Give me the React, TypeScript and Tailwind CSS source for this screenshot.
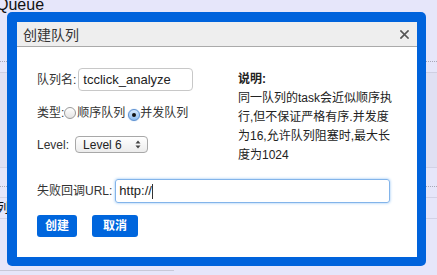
import React from "react";

const font = { fontFamily: '"Liberation Sans", "Noto Sans CJK SC", sans-serif' };

function Radio({ checked }: { checked?: boolean }) {
  return (
    <span
      className={
        "inline-flex items-center justify-center w-[12px] h-[12px] rounded-full border " +
        (checked
          ? "border-[#5b8fd0] bg-gradient-to-b from-[#d6e8fb] to-[#8dbcf0] shadow-[0_0_1px_#6aa0e0]"
          : "border-[#9a9a9a] bg-gradient-to-b from-white to-[#e4e4e4]")
      }
    >
      {checked && <span className="w-[4px] h-[4px] rounded-full bg-[#111]" />}
    </span>
  );
}

export default function App() {
  return (
    <div
      className="relative w-[437px] h-[275px] bg-[#e6e6fa] overflow-hidden text-[#333]"
      style={font}
    >
      {/* background page content */}
      <div className="flex flex-col w-full">
        <div className="h-[62px] border-b border-dotted border-[#a8a8b8]">
          <div className="-mt-[5px] -ml-[4px] text-[16px] leading-[20px] text-[#111]">Queue</div>
        </div>
        <div className="h-[11px] border-b border-[#cfcfe2]" />
        <div className="h-[95px] bg-[#e0e0f3] border-b border-[#d2d2e6]" />
        <div className="h-[19px] border-b border-dotted border-[#a8a8b8]" />
        <div className="h-[11px] border-b border-[#d2d2e6]" />
        <div className="h-[21px] border-b border-[#d2d2e6] flex items-center">
          <span className="-ml-[4px] text-[13px] text-[#111]">列</span>
        </div>
        <div className="h-[52px] border-b border-[#c8c8d8] w-[174px]" />
      </div>

      {/* modal */}
      <div className="absolute left-[7px] top-[12px] w-[419px] h-[254px] rounded-[5px] bg-[#0063dc] pt-[10px] pl-[10px]">
        <div className="w-[400px] h-[235px] bg-white flex flex-col">
          <div className="h-[25px] bg-[#eeeeee] border-b border-[#aaaaaa] flex items-center justify-between pl-[6px] pr-[8px]">
            <span className="text-[14px] leading-none text-[#333] mt-[1px]">创建队列</span>
            <svg width="9" height="9" viewBox="0 0 9 9" className="mt-[1px]">
              <path d="M1 1 L8 8 M8 1 L1 8" stroke="#555" strokeWidth="1.7" strokeLinecap="square" />
            </svg>
          </div>

          <div className="flex flex-col pt-[21px] pl-[20px] text-[12px]">
            <div className="flex">
              <div className="w-[201px] flex flex-col">
                <div className="flex items-center h-[23px]">
                  <span className="mr-[2px]">队列名:</span>
                  <div className="w-[115px] h-[23px] rounded-[4px] border border-[#c8c8c8] flex items-center px-[4px] text-[13px] text-[#222]">
                    tcclick_analyze
                  </div>
                </div>
                <div className="flex items-center h-[16px] mt-[14px]">
                  <span>类型:</span>
                  <Radio />
                  <span className="ml-[1px]">顺序队列</span>
                  <span className="ml-[3px]"><Radio checked /></span>
                  <span>并发队列</span>
                </div>
                <div className="flex items-center h-[17px] mt-[15px]">
                  <span className="mr-[6px]">Level:</span>
                  <div className="w-[73px] h-[17px] rounded-[4px] border border-[#a8a8a8] bg-gradient-to-b from-white to-[#ececec] flex items-center justify-between pl-[7px] pr-[6px] text-[12px] text-[#222]">
                    <span>Level 6</span>
                    <svg width="6" height="9" viewBox="0 0 6 9">
                      <path d="M3 0.5 L5.5 3.5 H0.5 Z M3 8.5 L5.5 5.5 H0.5 Z" fill="#444" />
                    </svg>
                  </div>
                </div>
              </div>
              <div className="w-[160px] leading-[19px] mt-[2px] text-[12px] text-[#222]">
                <div className="font-bold">说明:</div>
                <div>同一队列的task会近似顺序执行,但不保证严格有序.并发度为16,允许队列阻塞时,最大长度为1024</div>
              </div>
            </div>

            <div className="flex items-center h-[24px] mt-[14px]">
              <span className="mr-[3px]">失败回调URL:</span>
              <div className="w-[275px] h-[24px] rounded-[3px] border border-[#82b4ea] shadow-[0_0_3px_#8fc0f2] flex items-center px-[3px] text-[13px] text-[#222]">
                <span>http://</span>
                <span className="w-[1px] h-[15px] bg-[#333]" />
              </div>
            </div>

            <div className="flex mt-[12px] gap-[15px]">
              <div className="w-[40px] h-[22px] rounded-[3px] bg-[#0066dd] text-white font-bold text-[12px] flex items-center justify-center">
                创建
              </div>
              <div className="w-[46px] h-[22px] rounded-[3px] bg-[#0066dd] text-white font-bold text-[12px] flex items-center justify-center">
                取消
              </div>
            </div>
          </div>
        </div>
      </div>
    </div>
  );
}
